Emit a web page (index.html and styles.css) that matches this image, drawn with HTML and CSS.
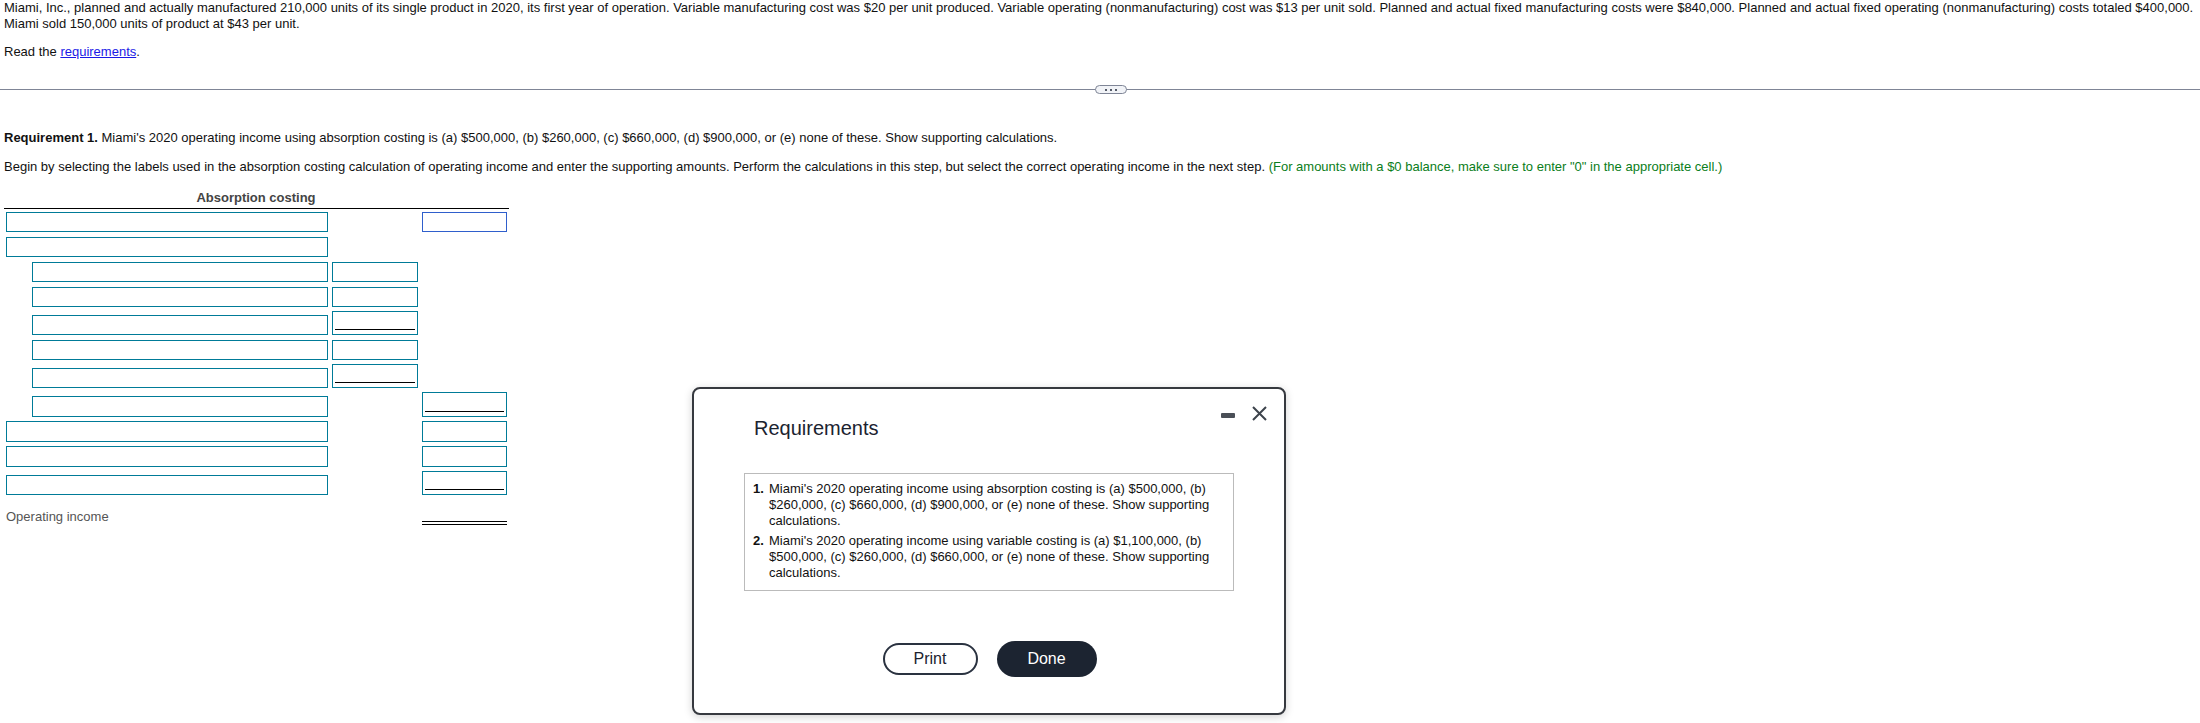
FILE: index.html
```html
<!DOCTYPE html>
<html lang="en">
<head>
<meta charset="utf-8">
<title>Requirement 1</title>
<link rel="stylesheet" href="styles.css">
</head>
<body>
<section class="intro">
  <p class="problem">Miami, Inc., planned and actually manufactured 210,000 units of its single product in 2020, its first year of operation. Variable manufacturing cost was $20 per unit produced. Variable operating (nonmanufacturing) cost was $13 per unit sold. Planned and actual fixed manufacturing costs were $840,000. Planned and actual fixed operating (nonmanufacturing) costs totaled $400,000.<br>Miami sold 150,000 units of product at $43 per unit.</p>
  <p class="read">Read the <a href="#req" class="link">requirements</a>.</p>
</section>
<div class="divider"><span class="pill"><i></i><i></i><i></i></span></div>
<section class="question">
  <p class="q1"><b>Requirement 1.</b> Miami's 2020 operating income using absorption costing is (a) $500,000, (b) $260,000, (c) $660,000, (d) $900,000, or (e) none of these. Show supporting calculations.</p>
  <p class="q2">Begin by selecting the labels used in the absorption costing calculation of operating income and enter the supporting amounts. Perform the calculations in this step, but select the correct operating income in the next step. <span class="hint">(For amounts with a $0 balance, make sure to enter "0" in the appropriate cell.)</span></p>
</section>
<section class="sheet">
  <div class="sheet-head">Absorption costing</div>
  <div class="rows">
    <div class="row loose"><div class="box label"></div><div></div><div class="box amt focus"></div></div>
    <div class="row loose"><div class="box label"></div><div></div><div></div></div>
    <div class="row loose"><div class="box label indent"></div><div class="box amt"></div><div></div></div>
    <div class="row"><div class="box label indent"></div><div class="box amt"></div><div></div></div>
    <div class="row loose"><div class="box label indent"></div><div class="box amt tall under"></div><div></div></div>
    <div class="row"><div class="box label indent"></div><div class="box amt"></div><div></div></div>
    <div class="row"><div class="box label indent"></div><div class="box amt tall under"></div><div></div></div>
    <div class="row"><div class="box label indent wide"></div><div></div><div class="box amt tall2 under"></div></div>
    <div class="row"><div class="box label wide"></div><div></div><div class="box amt wide"></div></div>
    <div class="row"><div class="box label wide"></div><div></div><div class="box amt wide"></div></div>
    <div class="row"><div class="box label"></div><div></div><div class="box amt tall under"></div></div>
    <div class="row total"><div class="total-label">Operating income</div><div></div><div class="double"></div></div>
  </div>
</section>
<section class="modal" id="req">
  <div class="modal-tools">
    <svg class="min" width="14" height="5" viewBox="0 0 14 5"><rect width="14" height="5" rx="1" fill="#4a4f57"/></svg>
    <svg class="close" width="15" height="15" viewBox="0 0 15 15"><path d="M1 1L14 14M14 1L1 14" stroke="#3d434c" stroke-width="2" fill="none"/></svg>
  </div>
  <h2 class="modal-title">Requirements</h2>
  <ol class="req-box">
    <li><b class="num">1.</b><span>Miami's 2020 operating income using absorption costing is (a) $500,000, (b) $260,000, (c) $660,000, (d) $900,000, or (e) none of these. Show supporting calculations.</span></li>
    <li><b class="num">2.</b><span>Miami's 2020 operating income using variable costing is (a) $1,100,000, (b) $500,000, (c) $260,000, (d) $660,000, or (e) none of these. Show supporting calculations.</span></li>
  </ol>
  <div class="actions">
    <button class="btn print" type="button">Print</button>
    <button class="btn done" type="button">Done</button>
  </div>
</section>
</body>
</html>
```

FILE: styles.css
```css
* { box-sizing: border-box; }
html, body { margin: 0; padding: 0; }
body {
  width: 2200px;
  height: 723px;
  overflow: hidden;
  background: #fff;
  color: #111;
  font-family: "Liberation Sans", Arial, sans-serif;
  font-size: 13px;
  line-height: 16px;
}
p { margin: 0; }
.intro { padding: 0 0 0 4px; }
.problem { white-space: nowrap; }
.read { margin-top: 12px; }
.link { color: #1a1ae6; text-decoration: underline; }

.divider {
  position: relative;
  margin-top: 29px;
  height: 1px;
  background: #7f8596;
}
.pill {
  position: absolute;
  left: 1095px;
  top: -4px;
  width: 32px;
  height: 9px;
  display: flex;
  align-items: center;
  justify-content: center;
  gap: 3px;
  background: #f1f3f7;
  border: 1px solid #7f8596;
  border-radius: 5px;
}
.pill i { width: 2px; height: 2px; background: #555b68; }

.question { padding: 40px 0 0 4px; }
.q2 { margin-top: 13px; white-space: nowrap; }
.hint { color: #0a7d20; }

.sheet { margin: 14px 0 0 4px; width: 505px; }
.sheet-head {
  text-align: center;
  font-weight: bold;
  color: #444;
  height: 20px;
  padding-right: 1px;
  border-bottom: 1px solid #000;
  line-height: 17px;
}
.rows {
  display: flex;
  flex-direction: column;
  gap: 4px;
  padding-top: 3px;
}
.row {
  display: grid;
  grid-template-columns: 326px 90px 89px;
  align-items: end;
}
.row.loose { margin-bottom: 1px; }
.box {
  height: 20px;
  border: 1px solid #007b98;
  background: #fff;
}
.label { margin: 0 2px; }
.label.indent { margin-left: 28px; }
.amt { position: relative; margin: 0 2px; }
.focus { border-color: #2f5fcc; }
.tall { height: 24px; }
.tall2 { height: 25px; }
.wide { height: 21px; }
.under::after {
  content: "";
  position: absolute;
  left: 2px;
  right: 2px;
  bottom: 4px;
  height: 1px;
  background: #000;
}
.total { margin-top: 6px; height: 18px; }
.total-label { color: #555; padding-left: 2px; margin-top: 4px; line-height: 16px; align-self: start; }
.double {
  margin: 0 2px 0;
  height: 4px;
  border-top: 1px solid #000;
  border-bottom: 1px solid #000;
  align-self: end;
}

.modal {
  position: absolute;
  left: 692px;
  top: 387px;
  width: 594px;
  height: 328px;
  background: #fff;
  border: 2px solid #36393f;
  border-radius: 8px;
  box-shadow: 0 2px 8px rgba(0, 0, 0, .18);
  padding: 27px 50px 0 50px;
}
.modal-tools {
  position: absolute;
  top: 17px;
  right: 17px;
  display: flex;
  align-items: center;
  gap: 17px;
}
.min { margin-top: 3px; }
.modal-title {
  margin: 0;
  padding-left: 10px;
  font-size: 20px;
  line-height: 24px;
  font-weight: normal;
  color: #1b2330;
}
.req-box {
  list-style: none;
  margin: 33px 0 0;
  padding: 7px 8px 7px;
  height: 118px;
  border: 1px solid #bbb;
}
.req-box li { display: flex; margin-bottom: 4px; }
.num { width: 16px; flex: none; }
.actions {
  display: flex;
  align-items: center;
  justify-content: center;
  gap: 19px;
  margin-top: 50px;
  padding-left: 1px;
}
.btn {
  font-family: inherit;
  font-size: 16px;
  border-radius: 18px;
  padding: 0;
}
.print {
  width: 95px;
  height: 32px;
  background: #fff;
  color: #1b2330;
  border: 2px solid #2a3240;
}
.done {
  width: 100px;
  height: 36px;
  background: #1c2431;
  color: #fff;
  border: 0;
}
```
